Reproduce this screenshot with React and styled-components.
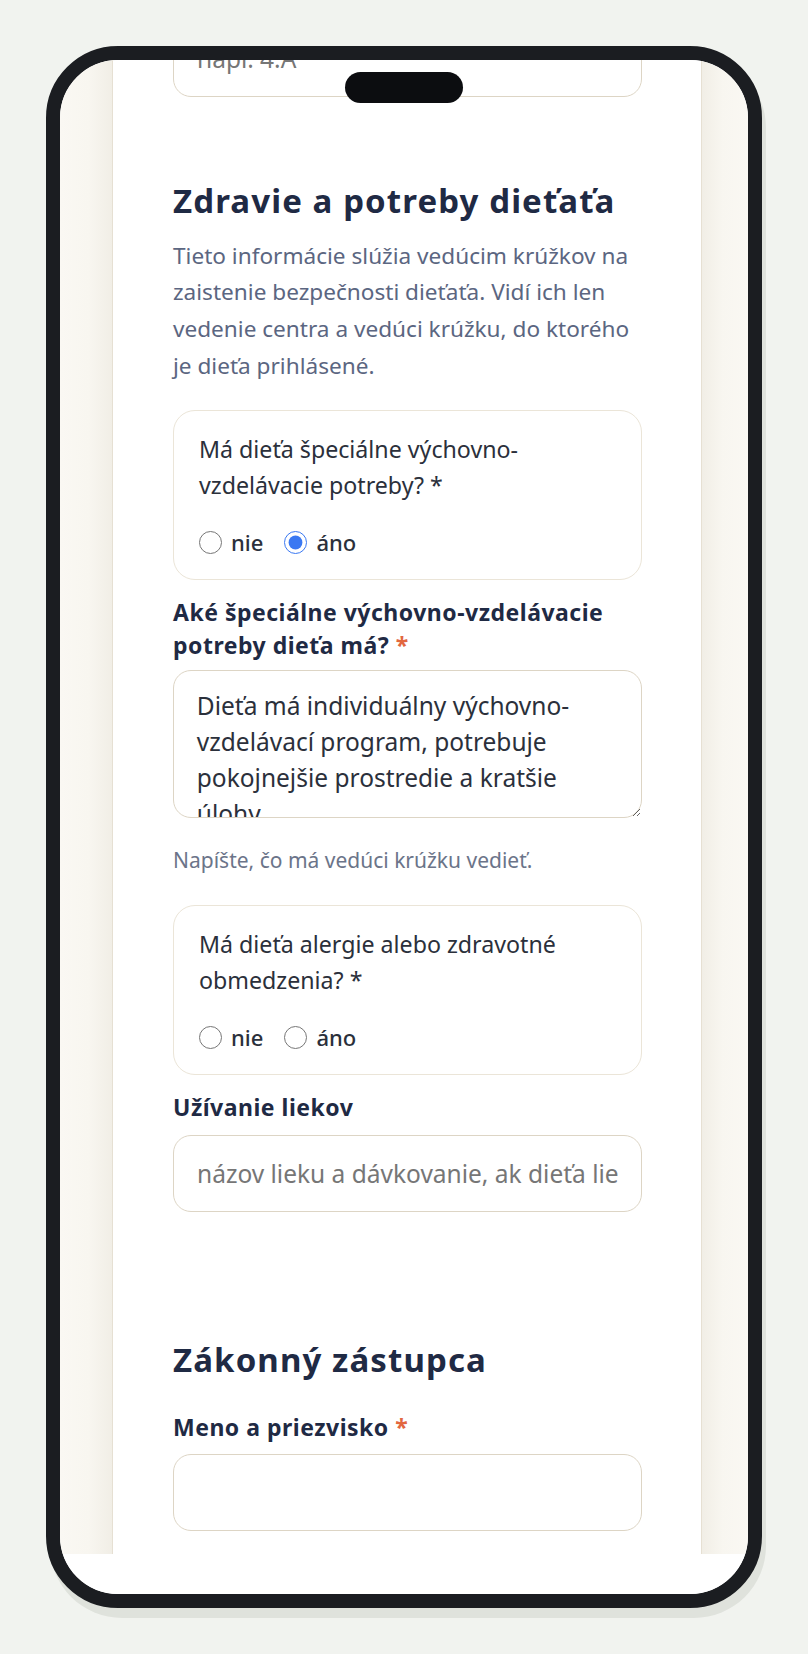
import React from "react";
import styled, { createGlobalStyle } from "styled-components";

const GlobalStyle = createGlobalStyle`
  html, body { margin: 0; padding: 0; background: #f1f3ef; }
  body { font-family: "Noto Sans", sans-serif; }
  * { box-sizing: border-box; }
`;

const Stage = styled.div`
  width: 808px;
  height: 1654px;
  padding: 46px 0 0 46px;
`;

const Phone = styled.div`
  position: relative;
  width: 716px;
  height: 1562px;
  border: 14px solid #1b1d21;
  border-radius: 72px;
  box-shadow: 4px 10px 0 #dfe2dc;
  overflow: hidden;
  background: #ffffff;
`;

const Island = styled.div`
  position: absolute;
  top: 12px;
  left: 50%;
  transform: translateX(-50%);
  width: 118px;
  height: 31px;
  border-radius: 16px;
  background: #0c0d10;
  z-index: 2;
`;

const Screen = styled.div`
  display: flex;
  flex-direction: column;
  height: 100%;
`;

const Viewport = styled.div`
  flex: 1;
  display: grid;
  grid-template-columns: 52px 590px 1fr;
  overflow: hidden;
`;

const Side = styled.div`
  background: ${(p) =>
    p.$right
      ? "linear-gradient(to right, #f1eee6 0%, #f8f6f0 45%, #faf8f3 100%)"
      : "linear-gradient(to right, #faf8f3 0%, #f8f6f0 55%, #f1eee6 100%)"};
`;

const Column = styled.main`
  background: #ffffff;
  border-left: 1px solid #e6e0d3;
  border-right: 1px solid #e6e0d3;
  padding: 0 59px 0 60px;
  overflow: hidden;
`;

const Content = styled.div`
  display: flex;
  flex-direction: column;
  margin-top: -40px;
`;

const BottomBar = styled.div`
  height: 40px;
  background: #ffffff;
`;

const SectionTitle = styled.h2`
  margin: ${(p) => p.$top}px 0 0;
  font-family: "Noto Sans", sans-serif;
  font-weight: 700;
  font-size: 33px;
  line-height: 40px;
  letter-spacing: 1.1px;
  color: #1f2a44;
`;

const Intro = styled.p`
  margin: 17px 0 0;
  font-size: 22.6px;
  line-height: 36.7px;
  color: #5b6681;
`;

const RadioCard = styled.fieldset`
  margin: ${(p) => p.$top}px 0 0;
  padding: 21px 25px 19.5px;
  border: 1.5px solid #ebe5d8;
  border-radius: 22px;
  min-width: 0;
`;

const Question = styled.legend`
  float: left;
  width: 100%;
  padding: 0;
  font-size: 23.2px;
  line-height: 35.7px;
  color: #2b303b;
`;

const RadioRow = styled.div`
  clear: both;
  display: flex;
  align-items: center;
  gap: 21px;
  height: 34px;
  padding-top: 22px;
  box-sizing: content-box;
`;

const RadioOption = styled.label`
  display: inline-flex;
  align-items: center;
  gap: 9px;
  font-size: 22px;
  font-weight: 500;
  line-height: 34px;
  color: #2b303b;
`;

const Radio = styled.input`
  width: 23px;
  height: 23px;
  margin: 0;
  accent-color: #3a78f2;
`;

const Field = styled.div`
  display: flex;
  flex-direction: column;
  gap: ${(p) => p.$gap || 11.5}px;
  margin-top: ${(p) => p.$top}px;
`;

const Label = styled.label`
  font-size: 23px;
  font-weight: 700;
  line-height: 33px;
  letter-spacing: 0.5px;
  color: #1f2a44;
`;

const Req = styled.span`
  color: #e2673f;
`;

const TextInput = styled.input`
  width: 100%;
  height: 76.7px;
  padding: 0 23px;
  border: 1.5px solid #ddd5c5;
  border-radius: 18px;
  background: #ffffff;
  font-family: "Noto Sans", sans-serif;
  font-size: 24.5px;
  color: #2b303b;
  outline: none;
  &::placeholder {
    color: #767676;
  }
`;

const TextArea = styled.textarea`
  width: 100%;
  height: 147.6px;
  padding: 17.3px 22.8px;
  border: 1.5px solid #ddd5c5;
  border-radius: 18px;
  font-family: "Noto Sans", sans-serif;
  font-size: 24.5px;
  line-height: 36px;
  color: #2b303b;
  overflow: hidden;
  resize: vertical;
  outline: none;
`;

const Hint = styled.p`
  margin: 27.3px 0 0;
  font-size: 21px;
  line-height: 30px;
  color: #6b7489;
`;

const noop = () => {};

function YesNo({ name, question, value }) {
  return (
    <>
      <Question>{question}</Question>
      <RadioRow>
        <RadioOption>
          <Radio type="radio" name={name} checked={value === "nie"} onChange={noop} />
          nie
        </RadioOption>
        <RadioOption>
          <Radio type="radio" name={name} checked={value === "ano"} onChange={noop} />
          áno
        </RadioOption>
      </RadioRow>
    </>
  );
}

export default function App() {
  return (
    <>
      <GlobalStyle />
      <Stage>
        <Phone>
          <Island />
          <Screen>
            <Viewport>
              <Side />
              <Column>
                <Content>
                  <TextInput placeholder="napr. 4.A" />

                  <SectionTitle $top={84}>Zdravie a potreby dieťaťa</SectionTitle>
                  <Intro>
                    Tieto informácie slúžia vedúcim krúžkov na zaistenie bezpečnosti
                    dieťaťa. Vidí ich len vedenie centra a vedúci krúžku, do ktorého je
                    dieťa prihlásené.
                  </Intro>

                  <RadioCard $top={25.5}>
                    <YesNo
                      name="svvp"
                      value="ano"
                      question="Má dieťa špeciálne výchovno-vzdelávacie potreby? *"
                    />
                  </RadioCard>

                  <Field $top={16} $gap={8}>
                    <Label>
                      Aké špeciálne výchovno-vzdelávacie potreby dieťa má? <Req>*</Req>
                    </Label>
                    <TextArea
                      defaultValue="Dieťa má individuálny výchovno-vzdelávací program, potrebuje pokojnejšie prostredie a kratšie úlohy."
                    />
                  </Field>
                  <Hint>Napíšte, čo má vedúci krúžku vedieť.</Hint>

                  <RadioCard $top={30}>
                    <YesNo
                      name="alergie"
                      value=""
                      question="Má dieťa alergie alebo zdravotné obmedzenia? *"
                    />
                  </RadioCard>

                  <Field $top={16}>
                    <Label>Užívanie liekov</Label>
                    <TextInput placeholder="názov lieku a dávkovanie, ak dieťa lieky užíva" />
                  </Field>

                  <SectionTitle $top={128.6}>Zákonný zástupca</SectionTitle>
                  <Field $top={30.4} $gap={10}>
                    <Label>
                      Meno a priezvisko <Req>*</Req>
                    </Label>
                    <TextInput />
                  </Field>
                </Content>
              </Column>
              <Side $right />
            </Viewport>
            <BottomBar />
          </Screen>
        </Phone>
      </Stage>
    </>
  );
}
